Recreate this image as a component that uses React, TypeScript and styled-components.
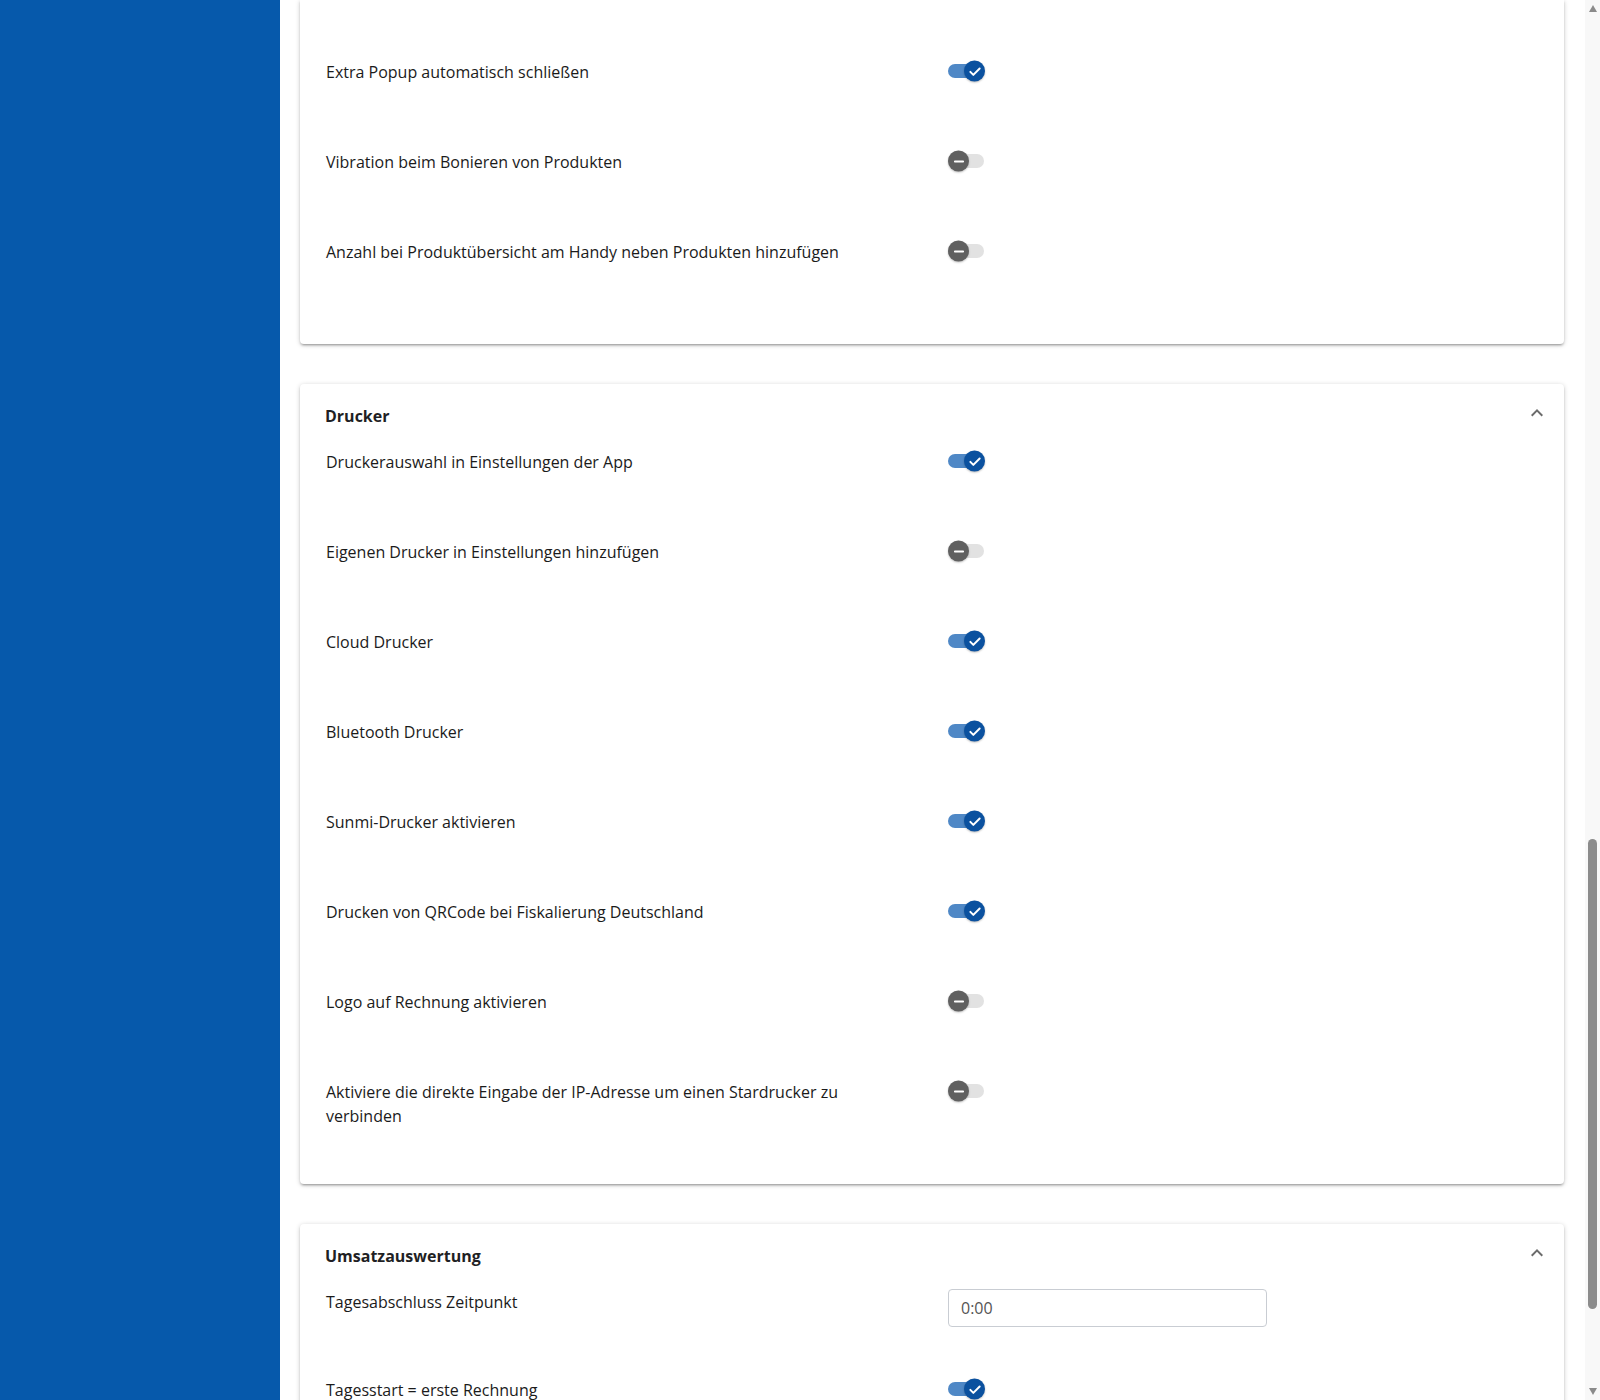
import React from "react";
import styled, { createGlobalStyle } from "styled-components";

const GlobalStyle = createGlobalStyle`
  html, body { height: 100%; overflow: hidden; }
  body {
    margin: 0;
    background: #ffffff;
    font-family: "Open Sans", "Liberation Sans", sans-serif;
    color: #1d1d1d;
  }
  #root { height: 100%; }
  * { box-sizing: border-box; }
`;

const Layout = styled.div`
  display: grid;
  grid-template-columns: 280px minmax(0, 1fr) 15px;
  height: 100vh;
  overflow: hidden;
`;

const Sidebar = styled.aside`
  background: #0659ab;
`;

const Main = styled.main`
  display: flex;
  flex-direction: column;
  gap: 40px;
  padding: 0 21px 20px 20px;
  overflow: hidden;
`;

const Card = styled.section<{ $continued?: boolean }>`
  flex: none;
  background: #ffffff;
  border-radius: ${(p) => (p.$continued ? "0 0 4px 4px" : "4px")};
  box-shadow: 0 1px 5px rgba(0, 0, 0, 0.2), 0 2px 2px rgba(0, 0, 0, 0.14),
    0 3px 1px -2px rgba(0, 0, 0, 0.12);
  padding: ${(p) => (p.$continued ? "60px" : "20px")} 15px 14px 25px;
`;

const Header = styled.header`
  display: flex;
  justify-content: space-between;
  align-items: flex-start;
  margin-bottom: 22px;
`;

const Title = styled.h2`
  margin: 0;
  font-size: 16px;
  line-height: 24px;
  font-weight: 700;
  color: #1f1f24;
`;

const Chevron = styled.svg`
  width: 24px;
  height: 24px;
  margin-top: -3px;
  fill: #6b6b6b;
  flex: none;
`;

const Row = styled.div<{ $h: number }>`
  display: grid;
  grid-template-columns: 560px minmax(0, 1fr);
  column-gap: 62px;
  align-items: start;
  padding-left: 1px;
  min-height: ${(p) => p.$h}px;
`;

const Label = styled.div`
  font-size: 16px;
  line-height: 24px;
  color: #1b1b1b;
`;

const ToggleBox = styled.div`
  position: relative;
  width: 38px;
  height: 22px;
  display: flex;
  align-items: center;
`;

const Track = styled.div<{ $on: boolean }>`
  width: 36px;
  height: 14px;
  border-radius: 7px;
  background: ${(p) => (p.$on ? "#4f88c6" : "#e2e2e2")};
`;

const Thumb = styled.div<{ $on: boolean }>`
  position: absolute;
  top: 50%;
  left: ${(p) => (p.$on ? "16px" : "0px")};
  transform: translateY(-50%);
  width: 21px;
  height: 21px;
  border-radius: 50%;
  background: ${(p) => (p.$on ? "#0b519f" : "#606060")};
  box-shadow: 0 1px 2px rgba(0, 0, 0, 0.25);
  display: flex;
  align-items: center;
  justify-content: center;
`;

const TextInput = styled.input`
  width: 319px;
  height: 38px;
  border: 1px solid #c9cdd3;
  border-radius: 4px;
  padding: 0 12px;
  font-family: "Open Sans", "Liberation Sans", sans-serif;
  font-size: 16px;
  color: #555555;
  background: #ffffff;
  outline: none;
  margin-top: -1px;
`;

const ScrollRail = styled.div`
  display: flex;
  flex-direction: column;
  align-items: center;
  background: #f8f8f8;
  padding: 5px 0;
`;

const ArrowUp = styled.div`
  width: 0;
  height: 0;
  border-left: 4.5px solid transparent;
  border-right: 4.5px solid transparent;
  border-bottom: 7px solid #8a8a8a;
  flex: none;
`;

const ArrowDown = styled.div`
  width: 0;
  height: 0;
  border-left: 4.5px solid transparent;
  border-right: 4.5px solid transparent;
  border-top: 7px solid #8a8a8a;
  flex: none;
`;

const RailTrack = styled.div`
  flex: 1;
  width: 100%;
  display: flex;
  flex-direction: column;
  align-items: center;
`;

const RailThumb = styled.div`
  margin-top: 827px;
  width: 9px;
  height: 470px;
  border-radius: 5px;
  background: #8c8c8c;
`;

type Setting =
  | { label: string; kind: "toggle"; on: boolean }
  | { label: string; kind: "input"; value: string };

type Section = { title?: string; rows: Setting[] };

const t = (label: string, on: boolean): Setting => ({ label, kind: "toggle", on });

const sections: Section[] = [
  {
    rows: [
      t("Extra Popup automatisch schließen", true),
      t("Vibration beim Bonieren von Produkten", false),
      t("Anzahl bei Produktübersicht am Handy neben Produkten hinzufügen", false),
    ],
  },
  {
    title: "Drucker",
    rows: [
      t("Druckerauswahl in Einstellungen der App", true),
      t("Eigenen Drucker in Einstellungen hinzufügen", false),
      t("Cloud Drucker", true),
      t("Bluetooth Drucker", true),
      t("Sunmi-Drucker aktivieren", true),
      t("Drucken von QRCode bei Fiskalierung Deutschland", true),
      t("Logo auf Rechnung aktivieren", false),
      t("Aktiviere die direkte Eingabe der IP-Adresse um einen Stardrucker zu verbinden", false),
    ],
  },
  {
    title: "Umsatzauswertung",
    rows: [
      { label: "Tagesabschluss Zeitpunkt", kind: "input", value: "0:00" },
      t("Tagesstart = erste Rechnung", true),
    ],
  },
];

function Toggle({ on }: { on: boolean }) {
  return (
    <ToggleBox role="switch" aria-checked={on}>
      <Track $on={on} />
      <Thumb $on={on}>
        {on ? (
          <svg width="16" height="16" viewBox="0 0 24 24" fill="none">
            <path
              d="M5 12.5l4.5 4.5L19 7.5"
              stroke="#ffffff"
              strokeWidth="3"
              strokeLinecap="round"
              strokeLinejoin="round"
            />
          </svg>
        ) : (
          <svg width="14" height="14" viewBox="0 0 24 24" fill="none">
            <path d="M5 12h14" stroke="#ffffff" strokeWidth="3.4" strokeLinecap="round" />
          </svg>
        )}
      </Thumb>
    </ToggleBox>
  );
}

export default function App() {
  return (
    <>
      <GlobalStyle />
      <Layout>
        <Sidebar />
        <Main>
          {sections.map((s, i) => (
            <Card key={s.title ?? `section-${i}`} $continued={!s.title}>
              {s.title && (
                <Header>
                  <Title>{s.title}</Title>
                  <Chevron viewBox="0 0 24 24" aria-hidden="true">
                    <path d="M7.41 15.41L12 10.83l4.59 4.58L18 14l-6-6-6 6z" />
                  </Chevron>
                </Header>
              )}
              {s.rows.map((r) => (
                <Row key={r.label} $h={r.kind === "input" ? 88 : 90}>
                  <Label>{r.label}</Label>
                  {r.kind === "toggle" ? (
                    <Toggle on={r.on} />
                  ) : (
                    <TextInput defaultValue={r.value} />
                  )}
                </Row>
              ))}
            </Card>
          ))}
        </Main>
        <ScrollRail aria-hidden="true">
          <ArrowUp />
          <RailTrack>
            <RailThumb />
          </RailTrack>
          <ArrowDown />
        </ScrollRail>
      </Layout>
    </>
  );
}
